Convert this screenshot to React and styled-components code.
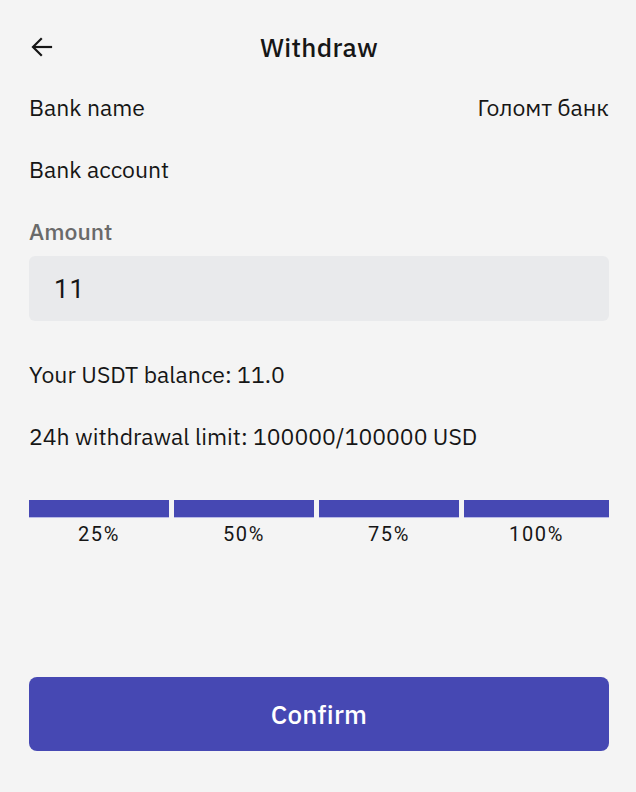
import React, { useState } from 'react';
import styled, { createGlobalStyle } from 'styled-components';

const GlobalStyle = createGlobalStyle`
    html, body {
        margin: 0;
        padding: 0;
        background-color: #F4F4F4;
    }
    body {
        font-family: "IBM Plex Sans", Roboto, "Noto Sans", sans-serif;
        color: #161616;
    }
`;

const Page = styled.div`
    width: 636px;
    height: 792px;
    box-sizing: border-box;
    padding: 0 27px 0 29px;
    display: flex;
    flex-direction: column;
    background-color: #F4F4F4;
`;

const Header = styled.div`
    position: relative;
    height: 96px;
    display: flex;
    align-items: center;
    justify-content: center;
`;

const BackButton = styled.button`
    position: absolute;
    left: 0;
    top: 34px;
    width: 26px;
    height: 26px;
    padding: 0;
    border: none;
    background: none;
    display: flex;
    align-items: center;
    justify-content: center;
    color: #161616;
    cursor: pointer;
`;

const Title = styled.h1`
    margin: 0;
    font-size: 26px;
    font-weight: 500;
    letter-spacing: 0.3px;
    transform: translateY(-1px);
`;

const Row = styled.div`
    display: flex;
    justify-content: space-between;
    align-items: center;
    height: 62px;
    font-size: 23px;
    margin-top: ${(props) => props.$first ? '-20px' : '0'};
`;

const Label = styled.span`
    color: ${(props) => props.$muted ? '#6A6A6A' : '#161616'};
    font-weight: ${(props) => props.$muted ? 500 : 400};
`;

const AmountBox = styled.div`
    height: 65px;
    border-radius: 6px;
    background-color: #E9EAEC;
    display: flex;
    align-items: center;
    padding: 0 23px;
    margin-top: -6px;
`;

const AmountInput = styled.input`
    border: none;
    background: transparent;
    outline: none;
    width: 100%;
    font-family: Roboto, "Noto Sans", sans-serif;
    font-size: 26px;
    letter-spacing: 1px;
    color: #161616;
`;

const InfoLine = styled.div`
    font-size: 23px;
    height: 62px;
    display: flex;
    align-items: center;
    margin-top: ${(props) => props.$first ? '22px' : '0'};
`;

const Steps = styled.div`
    display: grid;
    grid-template-columns: repeat(3, 140px) 1fr;
    gap: 5px;
    margin-top: 33px;
`;

const Step = styled.button`
    display: flex;
    flex-direction: column;
    align-items: stretch;
    padding: 0;
    border: none;
    background: none;
    cursor: pointer;
`;

const StepBar = styled.div`
    height: 17px;
    background-color: ${(props) => props.$active ? '#4648B3' : '#D6D7EE'};
    border-bottom: 1px solid #B9BAE6;
`;

const StepLabel = styled.span`
    margin-top: 4px;
    font-family: Roboto, "Noto Sans", sans-serif;
    font-size: 20px;
    letter-spacing: 1.6px;
    color: #161616;
    text-align: center;
`;

const Spacer = styled.div`
    flex: 1;
`;

const ConfirmButton = styled.button`
    height: 74px;
    margin: 0 0 41px 0;
    border: none;
    border-radius: 8px;
    background-color: #4648B3;
    color: #FFFFFF;
    font-family: "IBM Plex Sans", Roboto, sans-serif;
    font-size: 26px;
    font-weight: 500;
    letter-spacing: 0.2px;
    cursor: pointer;
`;

const BackArrow = () => (
    <svg width="22" height="20" viewBox="0 0 22 20" fill="none" stroke="currentColor" strokeWidth="2.2" strokeLinecap="square">
        <path d="M20 10H3" />
        <path d="M10 2L2 10L10 18" strokeLinejoin="miter" />
    </svg>
);

const steps = ['25%', '50%', '75%', '100%'];

const App = () => {
    const [amount, setAmount] = useState('11');
    const [step, setStep] = useState(3);

    return (
        <>
            <GlobalStyle />
            <Page>
                <Header>
                    <BackButton aria-label="Back"><BackArrow /></BackButton>
                    <Title>Withdraw</Title>
                </Header>

                <Row $first>
                    <Label>Bank name</Label>
                    <span>Голомт банк</span>
                </Row>
                <Row>
                    <Label>Bank account</Label>
                </Row>
                <Row>
                    <Label $muted>Amount</Label>
                </Row>

                <AmountBox>
                    <AmountInput value={amount} onChange={(e) => setAmount(e.target.value)} />
                </AmountBox>

                <InfoLine $first>Your USDT balance: 11.0</InfoLine>
                <InfoLine>24h withdrawal limit: 100000/100000 USD</InfoLine>

                <Steps>
                    {steps.map((s, i) => (
                        <Step key={s} onClick={() => setStep(i)}>
                            <StepBar $active={i <= step} />
                            <StepLabel>{s}</StepLabel>
                        </Step>
                    ))}
                </Steps>

                <Spacer />
                <ConfirmButton>Confirm</ConfirmButton>
            </Page>
        </>
    );
};

export default App;
